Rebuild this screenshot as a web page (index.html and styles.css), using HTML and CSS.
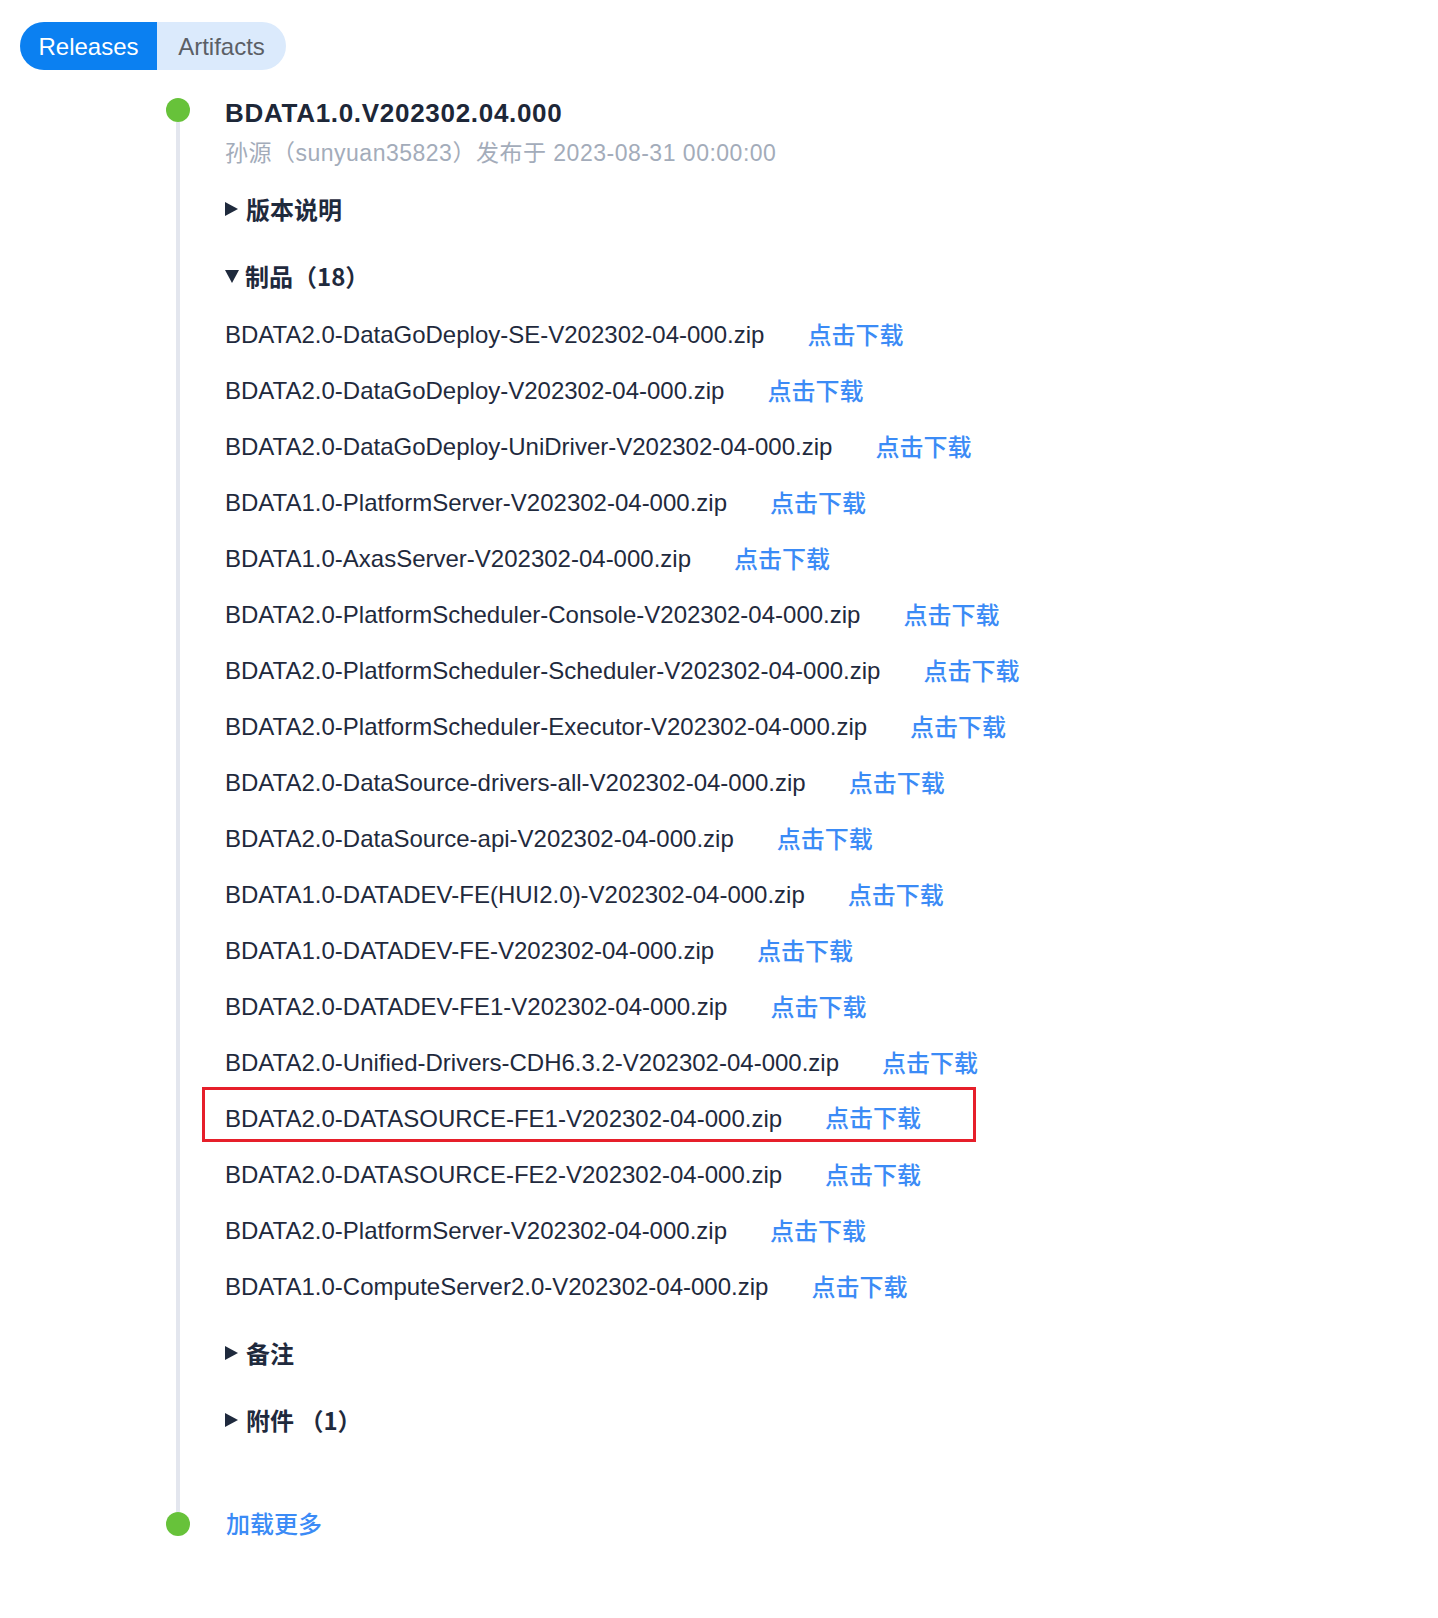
FILE: index.html
```html
<!DOCTYPE html>
<html lang="zh-CN">
<head>
<meta charset="utf-8">
<title>Releases</title>
<link rel="stylesheet" href="styles.css">
</head>
<body>
<div class="page">
  <div class="tabs">
    <div class="tab tab-active">Releases</div>
    <div class="tab">Artifacts</div>
  </div>

  <div class="timeline">
    <div class="tl-item">
      <div class="tl-rail">
        <span class="tl-dot"></span>
        <span class="tl-line"></span>
      </div>
      <div class="tl-body">
        <div class="rel-title">BDATA1.0.V202302.04.000</div>
        <div class="rel-meta">孙源（sunyuan35823）发布于 2023-08-31 00:00:00</div>

        <div class="section section-first"><span class="tri tri-right"></span>版本说明</div>
        <div class="section"><span class="tri tri-down"></span>制品（18）</div>

        <div class="files">
          <div class="file"><span class="fname">BDATA2.0-DataGoDeploy-SE-V202302-04-000.zip</span><a class="dl">点击下载</a></div>
          <div class="file"><span class="fname">BDATA2.0-DataGoDeploy-V202302-04-000.zip</span><a class="dl">点击下载</a></div>
          <div class="file"><span class="fname">BDATA2.0-DataGoDeploy-UniDriver-V202302-04-000.zip</span><a class="dl">点击下载</a></div>
          <div class="file"><span class="fname">BDATA1.0-PlatformServer-V202302-04-000.zip</span><a class="dl">点击下载</a></div>
          <div class="file"><span class="fname">BDATA1.0-AxasServer-V202302-04-000.zip</span><a class="dl">点击下载</a></div>
          <div class="file"><span class="fname">BDATA2.0-PlatformScheduler-Console-V202302-04-000.zip</span><a class="dl">点击下载</a></div>
          <div class="file"><span class="fname">BDATA2.0-PlatformScheduler-Scheduler-V202302-04-000.zip</span><a class="dl">点击下载</a></div>
          <div class="file"><span class="fname">BDATA2.0-PlatformScheduler-Executor-V202302-04-000.zip</span><a class="dl">点击下载</a></div>
          <div class="file"><span class="fname">BDATA2.0-DataSource-drivers-all-V202302-04-000.zip</span><a class="dl">点击下载</a></div>
          <div class="file"><span class="fname">BDATA2.0-DataSource-api-V202302-04-000.zip</span><a class="dl">点击下载</a></div>
          <div class="file"><span class="fname">BDATA1.0-DATADEV-FE(HUI2.0)-V202302-04-000.zip</span><a class="dl">点击下载</a></div>
          <div class="file"><span class="fname">BDATA1.0-DATADEV-FE-V202302-04-000.zip</span><a class="dl">点击下载</a></div>
          <div class="file"><span class="fname">BDATA2.0-DATADEV-FE1-V202302-04-000.zip</span><a class="dl">点击下载</a></div>
          <div class="file"><span class="fname">BDATA2.0-Unified-Drivers-CDH6.3.2-V202302-04-000.zip</span><a class="dl">点击下载</a></div>
          <div class="file file-marked"><span class="fname">BDATA2.0-DATASOURCE-FE1-V202302-04-000.zip</span><a class="dl">点击下载</a></div>
          <div class="file"><span class="fname">BDATA2.0-DATASOURCE-FE2-V202302-04-000.zip</span><a class="dl">点击下载</a></div>
          <div class="file"><span class="fname">BDATA2.0-PlatformServer-V202302-04-000.zip</span><a class="dl">点击下载</a></div>
          <div class="file"><span class="fname">BDATA1.0-ComputeServer2.0-V202302-04-000.zip</span><a class="dl">点击下载</a></div>
        </div>

        <div class="section section-after"><span class="tri tri-right"></span>备注</div>
        <div class="section"><span class="tri tri-right"></span>附件 <span class="paren">（1）</span></div>
      </div>
    </div>

    <div class="tl-item tl-last">
      <div class="tl-rail">
        <span class="tl-dot"></span>
      </div>
      <div class="tl-body">
        <a class="more">加载更多</a>
      </div>
    </div>
  </div>
</div>
</body>
</html>
```

FILE: styles.css
```css
* { box-sizing: border-box; }

html, body {
  margin: 0;
  padding: 0;
  background: #ffffff;
}

body {
  font-family: "Liberation Sans", Arial, "Noto Sans CJK SC", sans-serif;
  color: #1f2a3d;
}

.page {
  padding: 22px 0 40px 20px;
}

.tabs {
  display: inline-flex;
  height: 48px;
  border-radius: 24px;
  overflow: hidden;
  background: #dbeafc;
}

.tab {
  display: flex;
  align-items: center;
  justify-content: center;
  font-size: 24px;
  color: #5b5f66;
  width: 129px;
  padding-top: 1px;
}

.tab-active {
  width: 137px;
  background: #0b80f1;
  color: #ffffff;
}

.timeline {
  margin-top: 28px;
  padding-left: 146px;
}

.tl-item {
  display: flex;
}

.tl-rail {
  width: 24px;
  flex: none;
  display: flex;
  flex-direction: column;
  align-items: center;
}

.tl-dot {
  display: block;
  width: 24px;
  height: 24px;
  border-radius: 50%;
  background: #67c23a;
  flex: none;
}

.tl-line {
  display: block;
  width: 4px;
  flex: 1;
  background: #e3e6ee;
}

.tl-body {
  padding-left: 35px;
  flex: 1;
}

.tl-item:first-child .tl-body {
  padding-bottom: 77px;
}

.rel-title {
  font-size: 26px;
  font-weight: bold;
  letter-spacing: 0.7px;
  line-height: 30px;
  color: #1d2738;
}

.rel-meta {
  font-family: "Liberation Sans", Arial, "Noto Sans CJK SC", sans-serif;
  font-size: 23px;
  letter-spacing: 0.5px;
  line-height: 30px;
  margin-top: 10px;
  color: #a3acba;
}

.section {
  font-family: "Noto Sans CJK SC", "Liberation Sans", sans-serif;
  font-size: 24px;
  font-weight: bold;
  line-height: 30px;
  height: 30px;
  margin-top: 37px;
  color: #1f2a3d;
  display: flex;
  align-items: center;
  white-space: pre;
}

.section-first {
  margin-top: 26px;
}

.section-after {
  margin-top: 23px;
}

.tri {
  display: inline-block;
  width: 0;
  height: 0;
  flex: none;
}

.tri-right {
  border-top: 7px solid transparent;
  border-bottom: 7px solid transparent;
  border-left: 13px solid #1f2a3d;
  margin-right: 8px;
}

.tri-down {
  border-left: 7px solid transparent;
  border-right: 7px solid transparent;
  border-top: 13px solid #1f2a3d;
  margin-right: 6px;
  margin-top: 1px;
}

.paren {
  font-family: "Noto Sans CJK SC", sans-serif;
}

.files {
  margin-top: 16px;
}

.file {
  height: 56px;
  font-size: 24px;
  display: flex;
  align-items: center;
  white-space: nowrap;
  color: #1f2a3d;
}

.fname {
  line-height: 30px;
  margin-right: 43px;
}

.dl, .more {
  font-family: "Noto Sans CJK SC", sans-serif;
  font-weight: 500;
  color: #3b8bf6;
  font-size: 24px;
  line-height: 30px;
  text-decoration: none;
}

.dl {
  margin-top: -3px;
}

.file-marked {
  margin-left: -23px;
  padding-left: 20px;
  width: 774px;
  height: 55px;
  margin-top: -4px;
  margin-bottom: 5px;
  border: 3px solid #e61f2a;
  padding-top: 8px;
}

.tl-last .tl-body {
  display: flex;
  align-items: center;
  height: 24px;
}

.more {
  margin-left: 1px;
  margin-top: -3px;
}
```
